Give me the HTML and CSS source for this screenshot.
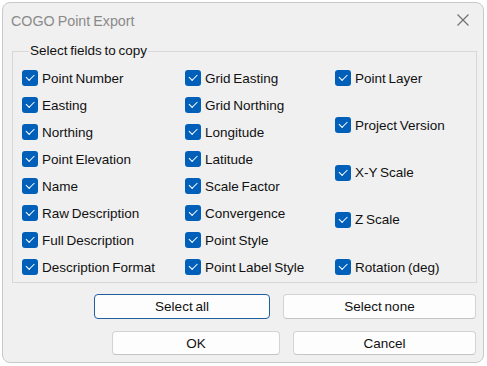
FILE: index.html
```html
<!DOCTYPE html>
<html lang="en">
<head>
  <meta charset="UTF-8">
  <title>COGO Point Export</title>
  <link rel="stylesheet" href="styles.css">
</head>
<body>
  <div class="window">
    <div class="titlebar">
      <span class="title">COGO Point Export</span>
      <svg class="close" width="12" height="12" viewBox="0 0 12 12">
        <path d="M0.5 0.5 L11.5 11.5 M11.5 0.5 L0.5 11.5" stroke="#6e6e6e" stroke-width="1.1" fill="none"/>
      </svg>
    </div>

    <fieldset class="group">
      <legend>Select fields to copy</legend>
      <div class="fields">
        <div class="col">
          <label class="check"><span class="box"></span>Point Number</label>
          <label class="check"><span class="box"></span>Easting</label>
          <label class="check"><span class="box"></span>Northing</label>
          <label class="check"><span class="box"></span>Point Elevation</label>
          <label class="check"><span class="box"></span>Name</label>
          <label class="check"><span class="box"></span>Raw Description</label>
          <label class="check"><span class="box"></span>Full Description</label>
          <label class="check"><span class="box"></span>Description Format</label>
        </div>
        <div class="col">
          <label class="check"><span class="box"></span>Grid Easting</label>
          <label class="check"><span class="box"></span>Grid Northing</label>
          <label class="check"><span class="box"></span>Longitude</label>
          <label class="check"><span class="box"></span>Latitude</label>
          <label class="check"><span class="box"></span>Scale Factor</label>
          <label class="check"><span class="box"></span>Convergence</label>
          <label class="check"><span class="box"></span>Point Style</label>
          <label class="check"><span class="box"></span>Point Label Style</label>
        </div>
        <div class="col spread">
          <label class="check"><span class="box"></span>Point Layer</label>
          <label class="check"><span class="box"></span>Project Version</label>
          <label class="check"><span class="box"></span>X-Y Scale</label>
          <label class="check"><span class="box"></span>Z Scale</label>
          <label class="check"><span class="box"></span>Rotation (deg)</label>
        </div>
      </div>
    </fieldset>

    <div class="btn-row">
      <button class="btn focus w-all">Select all</button>
      <button class="btn w-none">Select none</button>
    </div>
    <div class="btn-row second">
      <button class="btn w-ok">OK</button>
      <button class="btn w-cancel">Cancel</button>
    </div>
  </div>
</body>
</html>
```

FILE: styles.css
```css
*{
  margin: 0;
  padding: 0;
  box-sizing: border-box;
}
body{
  background: #fff;
  font-family: "Liberation Sans", Arial, sans-serif;
  font-size: 13.5px;
  word-spacing: -1px;
  color: #111;
}
.window{
  width: 482px;
  height: 361px;
  margin: 2px 0 0 2px;
  background: #f0f0f0;
  border: 1px solid #c9c9c9;
  border-radius: 8px;
  display: flex;
  flex-direction: column;
}
.titlebar{
  height: 36px;
  display: flex;
  align-items: center;
  justify-content: space-between;
  padding: 0 14px 0 8px;
}
.title{
  font-size: 14.3px;
  color: #8a8a8a;
}
.close{
  margin-top: -2px;
}
.group{
  margin: 4px 6px 0 9px;
  border: 1px solid #d8d8d8;
  padding: 0 0 5px 9px;
}
.group legend{
  margin-left: 7px;
  padding: 0 1px;
  line-height: 16px;
}
.fields{
  display: grid;
  grid-template-columns: 163px 150px 1fr;
  padding-top: 9px;
}
.col{
  display: flex;
  flex-direction: column;
  gap: 7px;
}
.col.spread{
  justify-content: space-between;
  gap: 0;
}
.check{
  display: flex;
  align-items: center;
  height: 20px;
  white-space: nowrap;
}
.box{
  position: relative;
  width: 16px;
  height: 16px;
  margin-right: 4px;
  border-radius: 3px;
  background: #005fb8;
  flex: none;
}
/* check mark */
.box::after{
  content: "";
  position: absolute;
  left: 4px;
  top: 4px;
  width: 7px;
  height: 3.5px;
  border-left: 1.2px solid #fff;
  border-bottom: 1.2px solid #fff;
  transform: rotate(-45deg);
}
.btn-row{
  display: flex;
  justify-content: flex-end;
  gap: 13px;
  margin: 11px 7px 0 0;
}
.btn-row.second{
  margin-top: 12px;
}
.btn{
  height: 25px;
  background: #fdfdfd;
  border: 1px solid #d3d3d3;
  border-bottom-color: #c4c4c4;
  border-radius: 4px;
  font-family: inherit;
  font-size: 13.5px;
  word-spacing: -1px;
  color: #111;
}
.btn.focus{
  border: 1px solid #1f5f9e;
}
.second .btn{
  height: 24px;
}
.w-all{ width: 176px; }
.w-none{ width: 193px; }
.w-ok{ width: 168px; }
.w-cancel{ width: 183px; }
```
